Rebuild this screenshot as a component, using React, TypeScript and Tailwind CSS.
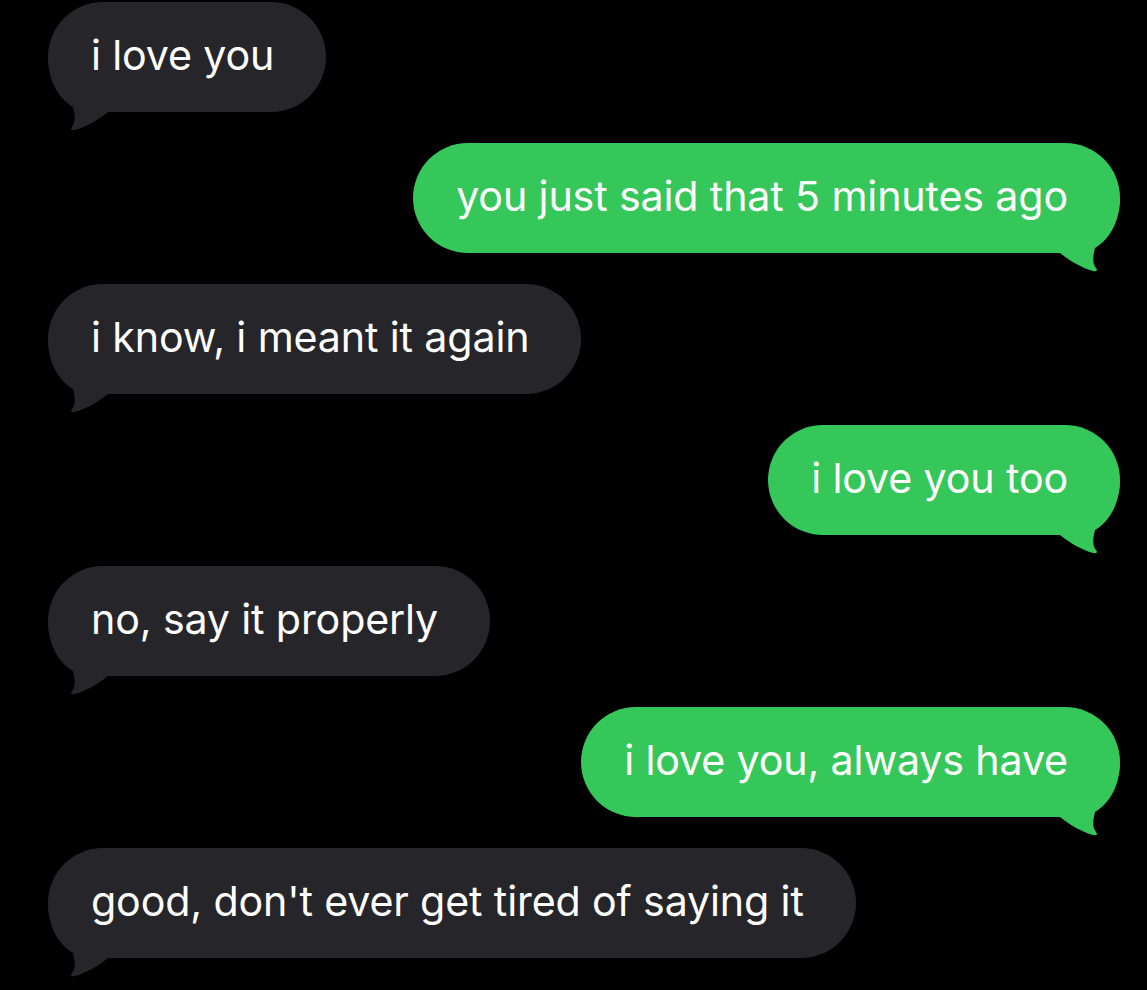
import React from "react";

type Msg = { text: string; me: boolean };

const msgs: Msg[] = [
  { text: "i love you", me: false },
  { text: "you just said that 5 minutes ago", me: true },
  { text: "i know, i meant it again", me: false },
  { text: "i love you too", me: true },
  { text: "no, say it properly", me: false },
  { text: "i love you, always have", me: true },
  { text: "good, don't ever get tired of saying it", me: false },
];

function Tail({ me }: { me: boolean }) {
  return (
    <svg
      width="80"
      height="76"
      viewBox="0 0 80 76"
      className={
        me
          ? "absolute right-0 bottom-[-21px] -scale-x-100"
          : "absolute left-0 bottom-[-21px]"
      }
      fill={me ? "#35c759" : "#262529"}
    >
      <path d="M0 0 C0 20 8 40 25 50 C27 58 28 65 24 70 Q21 74 27 73 C38 70 50 63 60 55 L80 55 L80 0 Z" />
    </svg>
  );
}

export default function App() {
  return (
    <div
      className="min-h-[990px] w-full bg-black pt-[2px] pl-[48px] pr-[27px] flex flex-col gap-[31px]"
      style={{ fontFamily: "Inter, 'Noto Sans', sans-serif" }}
    >
      {msgs.map((m, i) => (
        <div key={i} className={m.me ? "flex justify-end" : "flex justify-start"}>
          <div
            className={
              "relative h-[110px] rounded-[55px] flex items-center pl-[43px] pr-[52px] text-white text-[41.2px] tracking-[-0.15px] " +
              (m.me ? "bg-[#35c759]" : "bg-[#262529]")
            }
          >
            <Tail me={m.me} />
            <span className="relative pb-[2px]">{m.text}</span>
          </div>
        </div>
      ))}
    </div>
  );
}
